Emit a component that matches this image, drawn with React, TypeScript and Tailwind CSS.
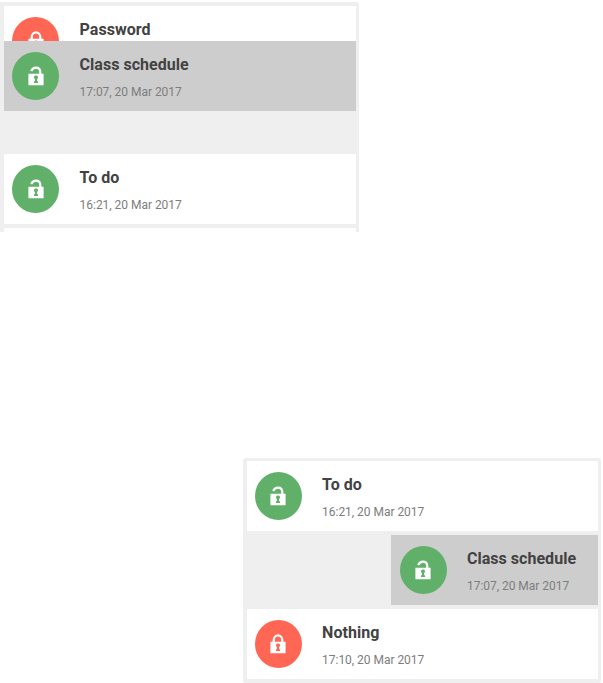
type NoteProps = {
  title: string;
  date?: string;
  locked?: boolean;
  className?: string;
};

function Lock({ locked }: { locked?: boolean }) {
  return (
    <svg width="16" height="20" viewBox="0 0 16 20" className="block">
      <path
        d={locked ? "M3.7 9V6.2a4.2 4.7 0 0 1 8.6 0V9" : "M3.2 5.1C4.2 2.9 5.8 1.7 7.9 1.7c2.6 0 4.4 1.8 4.4 4.6V9"}
        fill="none"
        stroke="#fff"
        strokeWidth="2.2"
      />
      <path
        fillRule="evenodd"
        fill="#fff"
        d="M.4 7.8h15.2v11.5H.4zM8 9.4a2 2 0 0 0-1.1 3.7v2.1h-.9v1.8h4v-1.8h-.9v-2.1A2 2 0 0 0 8 9.4z"
      />
    </svg>
  );
}

function Note({ title, date, locked, className = "bg-white" }: NoteProps) {
  return (
    <div className={`flex h-[70px] shrink-0 pl-[8.4px] pt-[10.5px] ${className}`}>
      <div
        className={`flex h-12 w-[47px] shrink-0 items-center justify-center rounded-[50%] ${
          locked ? "bg-[#ff6654]" : "bg-[#60b069]"
        }`}
      >
        <Lock locked={locked} />
      </div>
      <div className="ml-[20.2px] whitespace-nowrap pt-[3px]">
        <div className="text-[16px] leading-5 font-bold tracking-[0.03px] text-[#424242]">{title}</div>
        {date && <div className="mt-[9px] text-[12px] leading-4 tracking-[-0.03px] text-[#7d7d7d]">{date}</div>}
      </div>
    </div>
  );
}

export default function App() {
  return (
    <div className="flex h-[683px] w-[603px] flex-col overflow-hidden bg-white pt-0.5 font-[Roboto,sans-serif]">
      <section className="flex h-[230px] w-[358.5px] flex-col rounded-tr-[3px] bg-[#efefef] pt-1 pl-1 pr-[3px]">
        <div className="h-[35px] overflow-hidden bg-white">
          <Note title="Password" locked />
        </div>
        <Note title="Class schedule" date="17:07, 20 Mar 2017" className="bg-[#cdcdcd]" />
        <Note title="To do" date="16:21, 20 Mar 2017" className="mt-[43px] bg-white" />
        <div className="mt-1 h-1 bg-white" />
      </section>
      <section className="mt-[225.5px] ml-[243px] flex h-[225px] w-[358px] flex-col gap-1 rounded-[3px] bg-[#efefef] pt-[3.5px] pr-[3px] pl-[3.5px]">
        <Note title="To do" date="16:21, 20 Mar 2017" />
        <Note title="Class schedule" date="17:07, 20 Mar 2017" className="ml-[144.9px] bg-[#cdcdcd]" />
        <Note title="Nothing" date="17:10, 20 Mar 2017" locked />
      </section>
    </div>
  );
}
